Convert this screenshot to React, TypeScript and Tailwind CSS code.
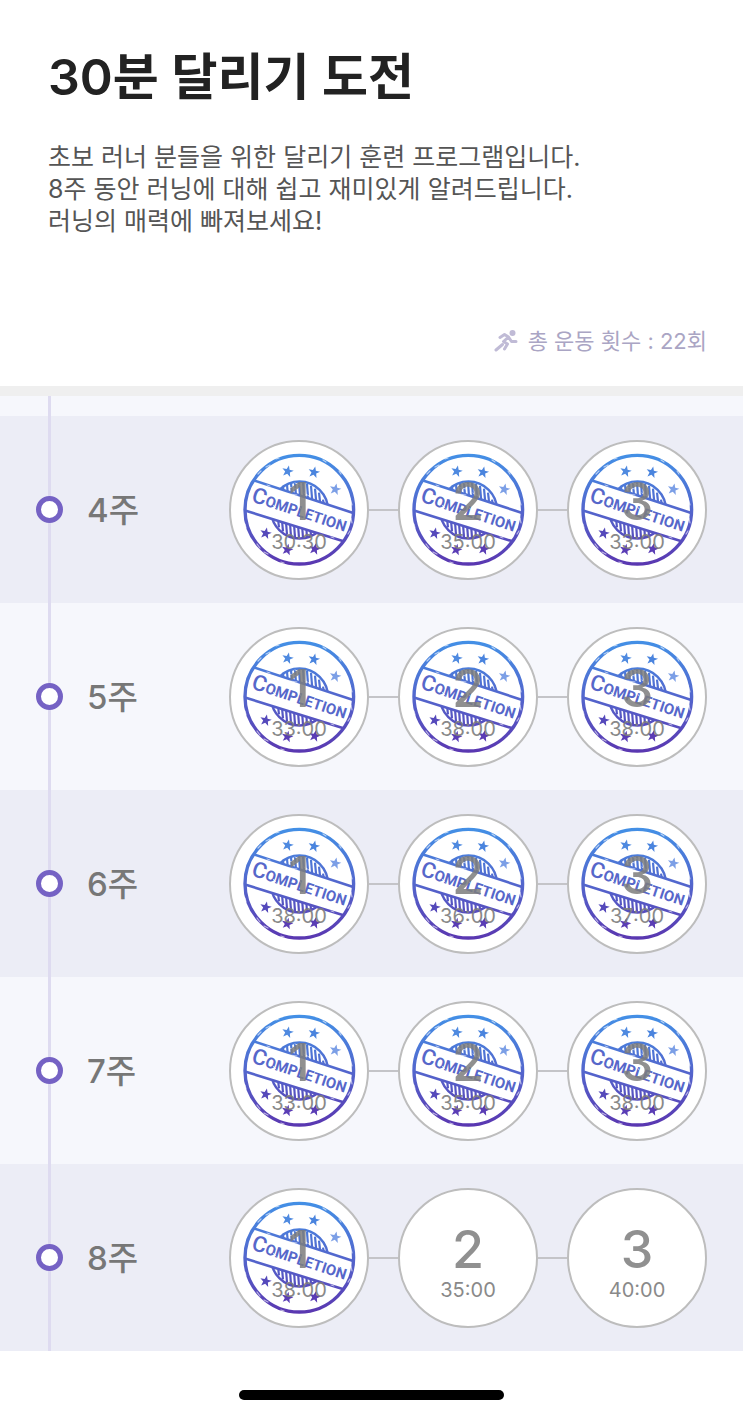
import { useId } from "react";

type Session = { time: string; done: boolean };
type Week = { label: string; sessions: Session[] };

const done = (time: string): Session => ({ time, done: true });
const todo = (time: string): Session => ({ time, done: false });

const weeks: Week[] = [
  { label: "4주", sessions: [done("30:30"), done("35:00"), done("33:00")] },
  { label: "5주", sessions: [done("33:00"), done("38:00"), done("38:00")] },
  { label: "6주", sessions: [done("38:00"), done("36:00"), done("37:00")] },
  { label: "7주", sessions: [done("33:00"), done("35:00"), done("38:00")] },
  { label: "8주", sessions: [done("38:00"), todo("35:00"), todo("40:00")] },
];

const STAR = "M0 -6L1.5 -2L5.8 -1.8L2.4 .8L3.6 5L0 2.5L-3.6 5L-2.4 .8L-5.8 -1.8L-1.5 -2Z";
const stars = [
  { x: 58.7, y: 31.3, fill: "#4f8ae0" },
  { x: 85, y: 32.3, fill: "#4a84de" },
  { x: 106.3, y: 49.3, fill: "#7c9fe6" },
  { x: 36.7, y: 93.3, fill: "#5549bb" },
  { x: 58.3, y: 109.7, fill: "#5a3db5" },
  { x: 85.7, y: 109, fill: "#5a3db5" },
];
const hatches = Array.from({ length: 14 }, (_, i) => 44 + i * 4);

function CompletionStamp() {
  const id = useId();
  const url = `url(#${id}ink)`;
  return (
    <svg viewBox="0 0 140 140" className="absolute -inset-0.5 h-[140px] w-[140px]" aria-hidden="true">
      <defs>
        <linearGradient id={`${id}ink`} gradientUnits="userSpaceOnUse" x1="70" y1="14" x2="70" y2="126">
          <stop offset="0" stopColor="#4390e6" />
          <stop offset="0.5" stopColor="#5366cd" />
          <stop offset="1" stopColor="#5a36b0" />
        </linearGradient>
        <clipPath id={`${id}top`}>
          <path d="M10 35.5L130 74.5V0H10Z" />
        </clipPath>
        <clipPath id={`${id}bottom`}>
          <path d="M10 69L130 106V140H10Z" />
        </clipPath>
      </defs>
      <circle cx="70.3" cy="69.7" r="54.3" fill="none" stroke={url} strokeWidth="3.4" />
      {["top", "bottom"].map((part) => (
        <g key={part} clipPath={`url(#${id}${part})`} stroke={url} fill="none">
          <circle cx="70.5" cy="70" r="28.5" strokeWidth="2.4" />
          {hatches.map((x) => {
            const half = Math.sqrt(Math.max(0, 28 * 28 - (x - 70) * (x - 70)));
            return <path key={x} d={`M${x - 2} ${70 - half}L${x + 2} ${70 + half}`} strokeWidth="2.2" />;
          })}
        </g>
      ))}
      <path d="M25 40.5L125 73.2M16 70.5L114.500 101.300" stroke={url} strokeWidth="2.6" />
      {stars.map(({ x, y, fill }) => (
        <path key={x} d={STAR} transform={`translate(${x} ${y}) rotate(12)`} fill={fill} />
      ))}
      <g transform="rotate(18 71 72)">
        <text x="70" y="77" textAnchor="middle" fontFamily="Roboto, sans-serif" fontWeight="700" fontSize="15" fill="#5667ca">
          <tspan fontSize="22" fontWeight="500">C</tspan>OMPLETION
        </text>
      </g>
      {/* worn ink */}
      <g stroke="#fff" strokeLinecap="round" opacity="0.6" fill="none">
        <path d="M29 34l3 -3M37 27l4 -2M47 19l3 -1M94 20l3 2M110 31l2 3M121 58l2 7M122 78l1 5M119 94l2 -3M28 104l3 4M35 112l4 2M52 122l3 1M16 84l1 4" strokeWidth="1.2" />
        <path d="M30 54l4 1M44 65l3 3M70 66l2 3M92 75l3 1M109 78l2 2M61 54l7 1M75 53l5 3M38 45l3 1M102 97l3 1M60 47l8 2M66 43l7 3" strokeWidth="1" />
      </g>
    </svg>
  );
}

function RunnerIcon() {
  return (
    <svg viewBox="0 0 24 24" className="h-6 w-6" fill="none" stroke="#c0bbd6" strokeWidth="3" strokeLinecap="round" strokeLinejoin="round" aria-hidden="true">
      <circle cx="18.500" cy="4" r="3" fill="#c0bbd6" stroke="none" />
      <path d="M6 8.500L10.500 5.500L14.500 8L17.500 12.500H22M14.500 8L9.500 12.500L13.500 15L10.500 20M8.500 15.500L2 21" />
    </svg>
  );
}

function SessionButton({ index, session }: { index: number; session: Session }) {
  return (
    <button
      type="button"
      className="relative flex h-[140px] w-[140px] shrink-0 flex-col items-center rounded-full border-2 border-[#bdbdbd] bg-white pt-8 font-[Inter,sans-serif] text-[#7d7d7d]"
    >
      {session.done && <CompletionStamp />}
      <span className="relative text-[52px] leading-[56px] font-medium opacity-85">{index}</span>
      <span className="relative text-xl leading-6 opacity-90">{session.time}</span>
    </button>
  );
}

export default function App() {
  return (
    <div className="min-h-screen bg-white font-[Inter,'Noto_Sans_CJK_KR',sans-serif]">
      <header className="px-12 pt-[45px]">
        <h1 className="text-[50px] leading-[64px] font-semibold text-[#222]">30분 달리기 도전</h1>
        <p className="mt-8 text-[25px] leading-8 text-[#555]">
          초보 러너 분들을 위한 달리기 훈련 프로그램입니다.
          <br />
          8주 동안 러닝에 대해 쉽고 재미있게 알려드립니다.
          <br />
          러닝의 매력에 빠져보세요!
        </p>
      </header>
      <div className="mt-[88px] flex items-center justify-end gap-2.5 pr-9 text-[22px] leading-8 text-[#aaa5c4]">
        <RunnerIcon />
        <span>총 운동 횟수 : 22회</span>
      </div>

      <main className="relative mt-[29px] border-t-10 border-[#efefef] bg-[#f6f7fc] pt-5">
        <div className="absolute inset-y-0 left-12 w-[3px] bg-[#dedbf0]" />
        <ul className="relative">
          {weeks.map((week) => (
            <li key={week.label} className="relative flex h-[187px] items-center pr-9 pl-9 odd:bg-[#ecedf6]">
              <div className="absolute inset-y-0 left-12 w-[3px] bg-[#dedbf0]" />
              <span className="relative h-[27px] w-[27px] rounded-full border-5 border-[#7562c4] bg-white" />
              <span className="ml-6 text-[33px] leading-10 font-medium text-[#777]">{week.label}</span>
              <div className="ml-auto flex items-center">
                {week.sessions.map((session, i) => (
                  <div key={i} className="flex items-center">
                    {i > 0 && <div className="h-0.5 w-[29px] bg-[#c4c4c8]" />}
                    <SessionButton index={i + 1} session={session} />
                  </div>
                ))}
              </div>
            </li>
          ))}
        </ul>
      </main>

      <footer className="flex justify-center pt-[39px] pb-3">
        <div className="h-[10px] w-[265px] rounded-full bg-black" />
      </footer>
    </div>
  );
}
